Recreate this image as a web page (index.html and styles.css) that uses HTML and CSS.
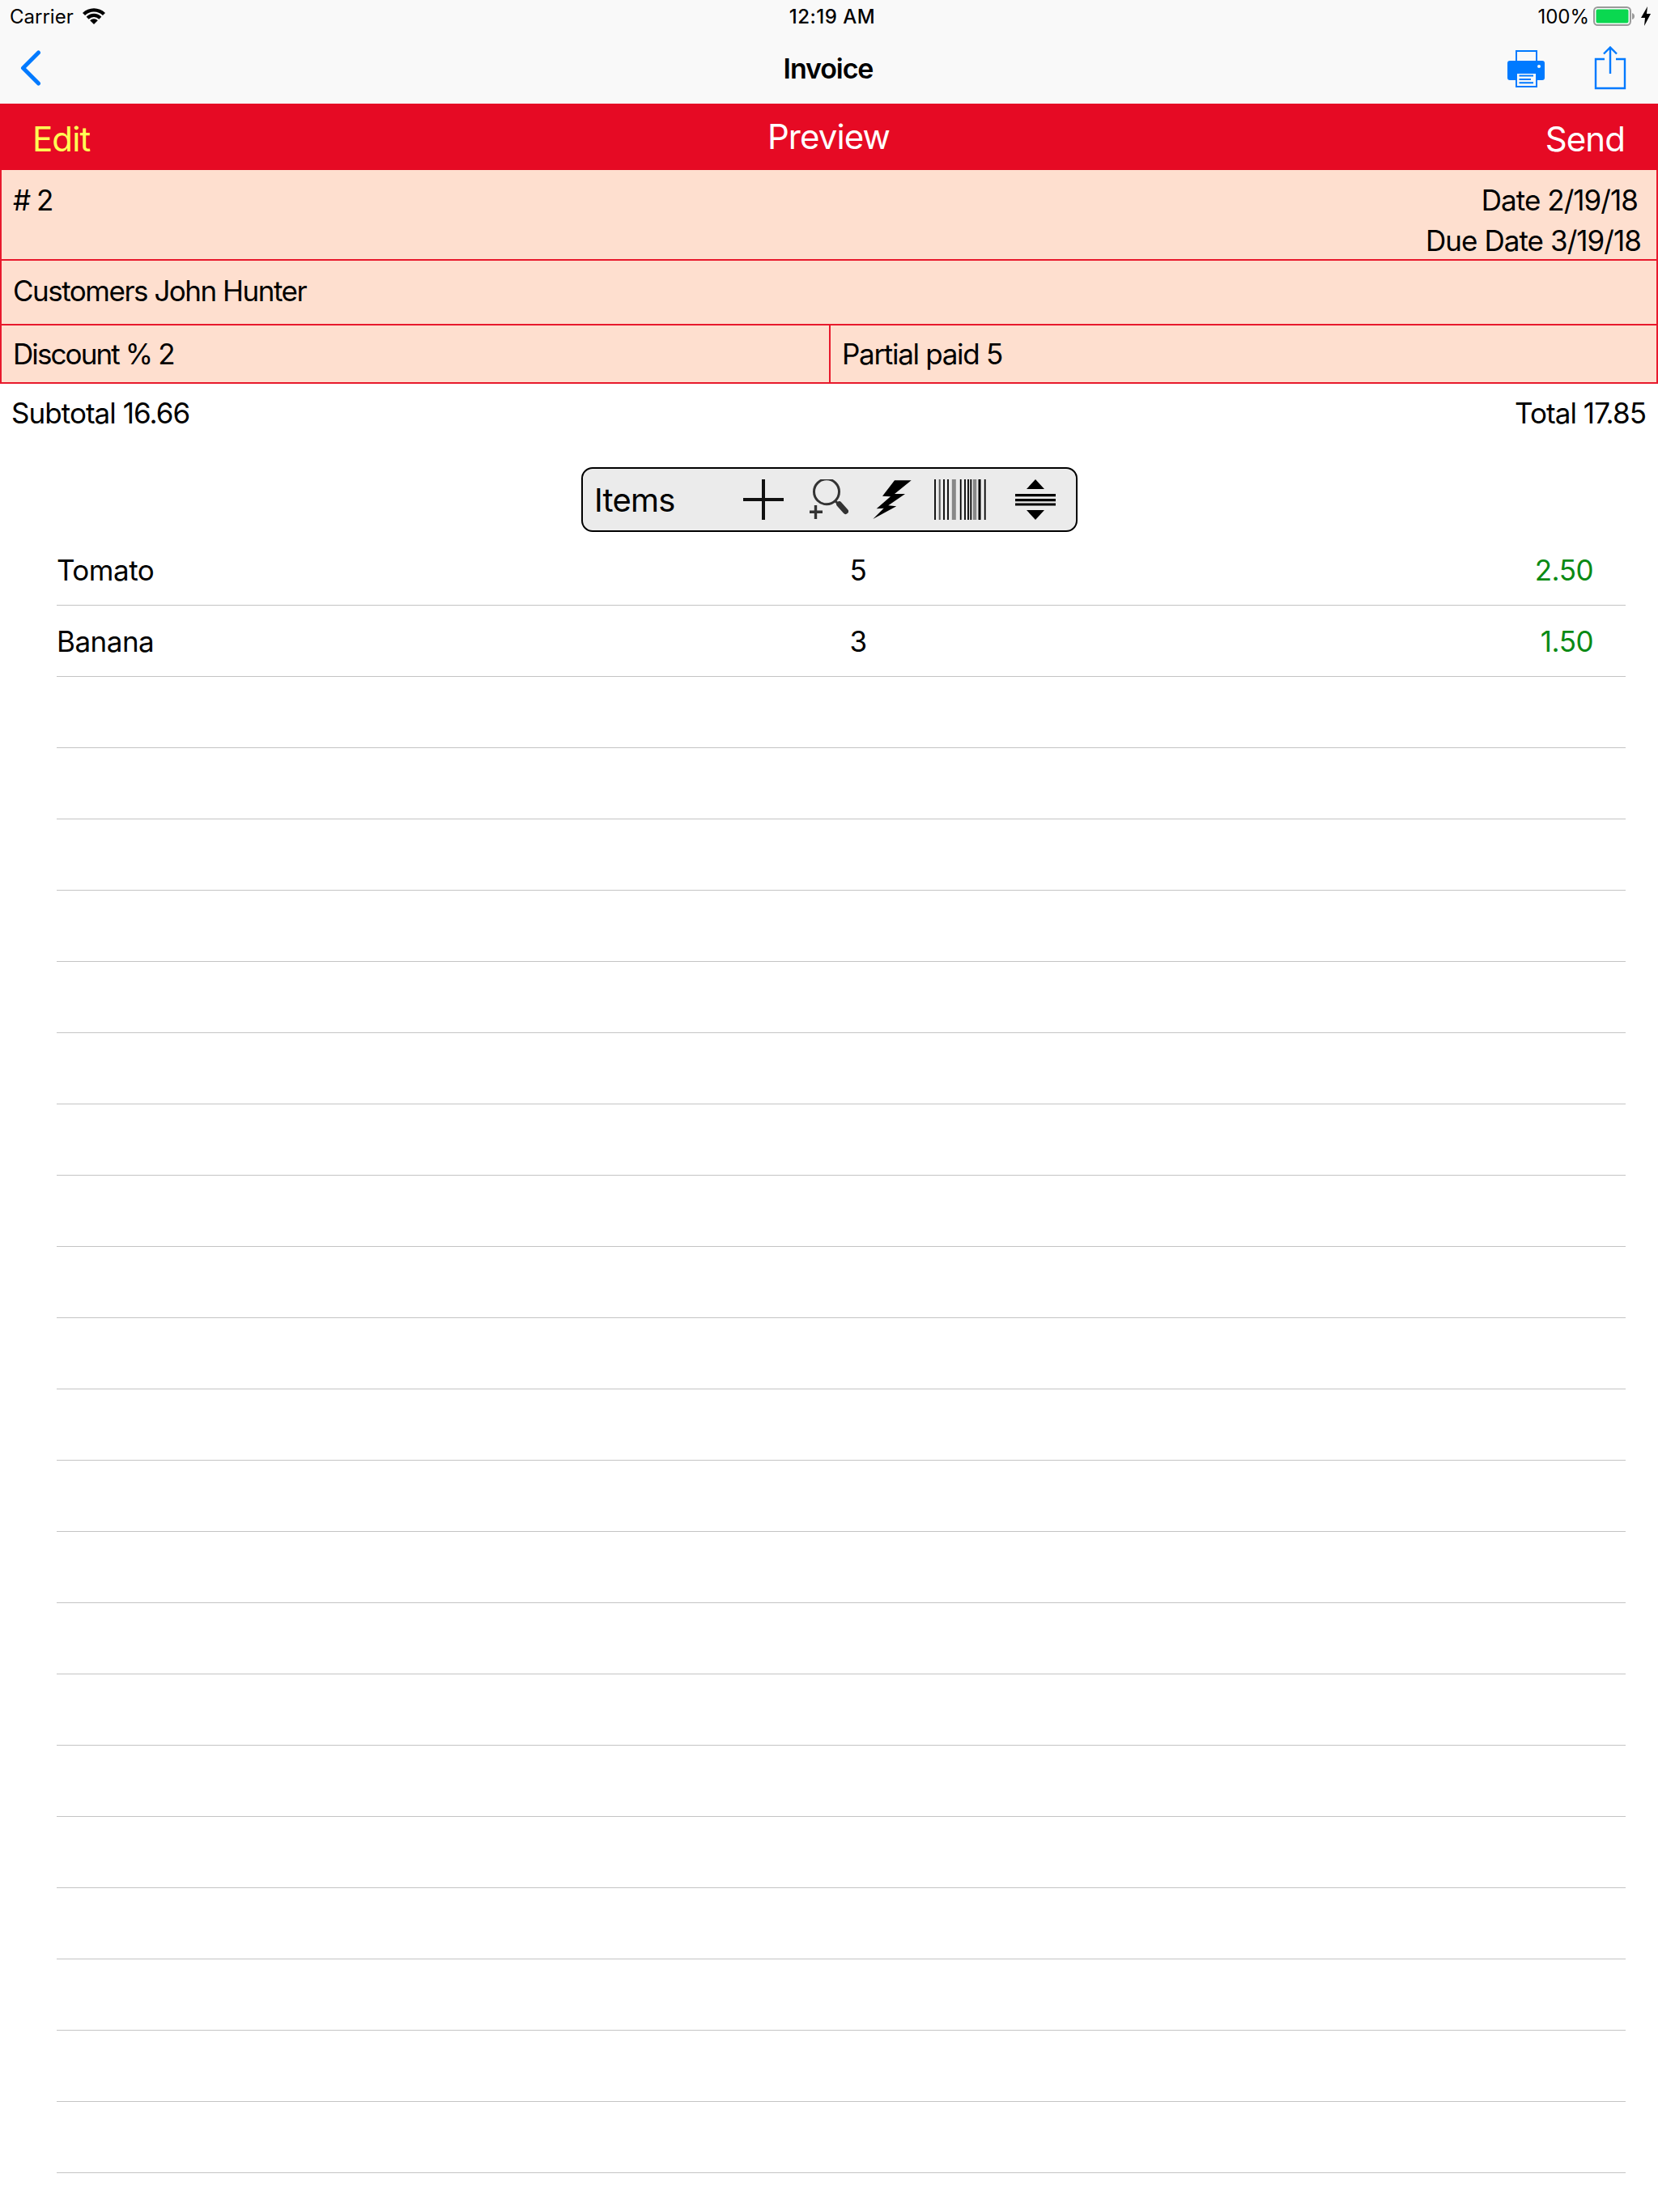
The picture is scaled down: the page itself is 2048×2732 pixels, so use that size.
FILE: index.html
```html
<!DOCTYPE html>
<html lang="en">
<head>
  <meta charset="UTF-8">
  <title>Invoice</title>
  <link rel="stylesheet" href="styles.css">
</head>
<body>
  <div class="status-bar">
    <div class="status-left">
      <span>Carrier</span>
      <svg class="wifi" width="28" height="20" viewBox="0 0 28 20">
        <path d="M14 20 L9.200 15.200 A6.800 6.800 0 0 1 18.800 15.200 Z" fill="#000"/>
        <path d="M7.640 13.640 A9 9 0 0 1 20.360 13.640 L23.330 10.670 A13.200 13.200 0 0 0 4.670 10.670 Z" fill="#000"/>
        <path d="M3.040 9.040 A15.500 15.500 0 0 1 24.960 9.040 L28 6 A19.800 19.800 0 0 0 0 6 Z" fill="#000"/>
      </svg>
    </div>
    <div class="status-time">12:19 AM</div>
    <div class="status-right">
      <span>100%</span>
      <svg class="battery" width="54" height="24" viewBox="0 0 54 24">
        <rect x="1" y="1" width="45" height="22" rx="4.500" fill="none" stroke="#9a9a9a" stroke-width="2"/>
        <rect x="3.500" y="3.500" width="40" height="17" rx="2" fill="#0ad850"/>
        <path d="M48 8 Q51 9 51 12 Q51 15 48 16 Z" fill="#9a9a9a"/>
      </svg>
      <svg class="bolt" width="12" height="24" viewBox="0 0 12 24">
        <path d="M8 0 L0 14 H5 L4 24 L12 9 H7 Z" fill="#000"/>
      </svg>
    </div>
  </div>

  <nav class="navbar">
    <div class="nav-left">
      <svg width="26" height="44" viewBox="0 0 26 44">
        <path d="M22.500 3 L3.500 22 L22.500 41" fill="none" stroke="#007aff" stroke-width="5" stroke-linecap="round" stroke-linejoin="round"/>
      </svg>
    </div>
    <div class="nav-title">Invoice</div>
    <div class="nav-right">
      <svg class="print-icon" width="48" height="48" viewBox="0 0 48 48">
        <rect x="12" y="3" width="25" height="13" fill="none" stroke="#007aff" stroke-width="2"/>
        <path d="M4 15 H44 Q47 15 47 18 V36 Q47 39 44 39 H4 Q1 39 1 36 V18 Q1 15 4 15 Z" fill="#007aff"/>
        <circle cx="40" cy="22" r="2" fill="#f9f9f9"/>
        <rect x="12" y="30" width="25" height="17" fill="#f9f9f9" stroke="#007aff" stroke-width="2"/>
        <path d="M15.500 33.500 H33 M15.500 38 H30 M15.500 42.300 H33" stroke="#007aff" stroke-width="2"/>
      </svg>
      <svg class="share-icon" width="40" height="54" viewBox="0 0 40 54">
        <path d="M13 16 H2 V52 H38 V16 H27" fill="none" stroke="#007aff" stroke-width="2.400"/>
        <path d="M20 2 V34 M12 9.500 L20 1.500 L28 9.500" fill="none" stroke="#007aff" stroke-width="2.400"/>
      </svg>
    </div>
  </nav>

  <div class="tab-bar">
    <div class="tab-edit">Edit</div>
    <div class="tab-preview">Preview</div>
    <div class="tab-send">Send</div>
  </div>

  <div class="info-box">
    <div class="info-row info-head">
      <div class="invoice-no">#&nbsp;2</div>
      <div class="dates">
        <div class="date">Date 2/19/18</div>
        <div class="due-date">Due Date 3/19/18</div>
      </div>
    </div>
    <div class="info-row info-customer">Customers John Hunter</div>
    <div class="info-row info-split">
      <div class="split-cell discount">Discount % 2</div>
      <div class="split-cell partial">Partial paid 5</div>
    </div>
  </div>

  <div class="totals">
    <div>Subtotal 16.66</div>
    <div>Total 17.85</div>
  </div>

  <div class="toolbar-wrap">
    <div class="toolbar">
      <span class="toolbar-label">Items</span>
      <svg class="tool-plus" width="50" height="50" viewBox="0 0 50 50">
        <path d="M25 0 V50 M0 25 H50" stroke="#111" stroke-width="4"/>
      </svg>
      <svg class="tool-search" width="50" height="50" viewBox="0 0 50 50">
        <circle cx="23" cy="15.300" r="15.500" fill="none" stroke="#333" stroke-width="3"/>
        <path d="M33 26 L39 32" stroke="#333" stroke-width="3"/>
        <path d="M38.700 30.700 L46.500 39.500" stroke="#333" stroke-width="7" stroke-linecap="round"/>
        <path d="M2 40.300 H18 M9.500 32 V49" stroke="#333" stroke-width="3.400"/>
      </svg>
      <svg class="tool-bolt" width="48" height="48" viewBox="0 0 48 48">
        <path d="M27 0.300 H47.700 L27 17 H40 L19.300 31.300 L29.300 32.300 L0.300 48 L13.700 34.700 L4.700 35.300 L22 20.300 L12 19.700 Z" fill="#000"/>
      </svg>
      <svg class="tool-barcode" width="65" height="50" viewBox="0 0 65 50">
        <path d="M1 0 V50 M12 0 V50 M17 0 V50 M32.700 0 V50 M38 0 V50 M42 0 V50 M45.300 0 V50 M62.700 0 V50" stroke="#000" stroke-width="1.800"/>
        <path d="M6.700 0 V50" stroke="#555" stroke-width="2"/>
        <path d="M24.300 0 V50" stroke="#888" stroke-width="5"/>
        <path d="M50 0 V50" stroke="#888" stroke-width="4.500"/>
        <path d="M56 0 V50" stroke="#000" stroke-width="3"/>
      </svg>
      <svg class="tool-sort" width="51" height="50" viewBox="0 0 51 50">
        <path d="M25 0 L36 12 H14 Z M14 38 H36 L25 50 Z" fill="#000"/>
        <path d="M0 19.700 H50 M0 25.700 H50 M0 31 H50" stroke="#000" stroke-width="3.200"/>
      </svg>
    </div>
  </div>

  <div class="items">
    <div class="item-row"><span>Tomato</span><span class="qty">5</span><span class="price">2.50</span></div>
    <div class="item-row"><span>Banana</span><span class="qty">3</span><span class="price">1.50</span></div>
    <div class="item-row"></div>
    <div class="item-row"></div>
    <div class="item-row"></div>
    <div class="item-row"></div>
    <div class="item-row"></div>
    <div class="item-row"></div>
    <div class="item-row"></div>
    <div class="item-row"></div>
    <div class="item-row"></div>
    <div class="item-row"></div>
    <div class="item-row"></div>
    <div class="item-row"></div>
    <div class="item-row"></div>
    <div class="item-row"></div>
    <div class="item-row"></div>
    <div class="item-row"></div>
    <div class="item-row"></div>
    <div class="item-row"></div>
    <div class="item-row"></div>
    <div class="item-row"></div>
    <div class="item-row"></div>
  </div>
</body>
</html>
```

FILE: styles.css
```css
:root {
  --blue: #007aff;
  --red: #e60a24;
  --peach: #fedfcf;
  --line: #e8192c;
}

html, body {
  margin: 0;
  padding: 0;
}

body {
  width: 2048px;
  height: 2732px;
  overflow: hidden;
  background-color: #fff;
  color: #000;
  font-family: 'Inter', sans-serif;
  font-size: 35px;
  letter-spacing: -0.5px;
}

.status-bar {
  height: 40px;
  display: grid;
  grid-template-columns: 1fr auto 1fr;
  align-items: center;
  padding: 0 9px 0 12px;
  background-color: #f9f9f9;
  font-size: 24px;
  letter-spacing: 0;
}

.status-left {
  display: flex;
  align-items: center;
  gap: 11px;
}

.status-time {
  font-weight: 500;
  letter-spacing: 0.5px;
  padding-left: 5px;
}

.status-right {
  display: flex;
  align-items: center;
  justify-content: flex-end;
  gap: 5px;
}

.navbar {
  height: 88px;
  display: grid;
  grid-template-columns: 1fr auto 1fr;
  align-items: center;
  background-color: #f9f9f9;
}

.nav-left {
  padding-left: 25px;
  display: flex;
}

.nav-title {
  font-size: 34px;
  font-weight: 600;
  letter-spacing: -1.1px;
  margin-left: -2px;
}

.nav-right {
  display: flex;
  align-items: center;
  justify-content: flex-end;
  gap: 60px;
  padding-right: 39px;
}

.tab-bar {
  height: 82px;
  display: grid;
  grid-template-columns: 1fr auto 1fr;
  align-items: center;
  padding: 0 41px 0 40px;
  background-color: var(--red);
  color: #fff;
  font-size: 42px;
  letter-spacing: -0.9px;
}

.tab-edit {
  color: #ffff55;
  margin-top: 4px;
}

.tab-preview {
  margin-top: -2px;
}

.tab-send {
  text-align: right;
  margin-top: 4px;
}

.info-box {
  background-color: var(--peach);
  border-left: 2px solid var(--line);
  border-right: 2px solid var(--line);
  letter-spacing: -0.95px;
}

.info-row {
  box-sizing: border-box;
  border-bottom: 2px solid var(--line);
  padding: 0 14px;
}

.info-head {
  height: 112px;
  display: flex;
  justify-content: space-between;
  padding-top: 16px;
  padding-right: 19px;
}

.invoice-no {
  letter-spacing: -1.5px;
}

.dates {
  display: flex;
  flex-direction: column;
  align-items: flex-end;
}

.date {
  padding-right: 4px;
  height: 50px;
}

.info-customer {
  height: 80px;
  display: flex;
  align-items: center;
  padding-bottom: 4px;
  letter-spacing: -1.5px;
}

.info-split {
  height: 72px;
  display: grid;
  grid-template-columns: 1fr 1fr;
  padding: 0;
}

.split-cell {
  display: flex;
  align-items: center;
  padding-left: 14px;
}

.split-cell + .split-cell {
  border-left: 2px solid var(--line);
}

.discount {
  letter-spacing: -1.9px;
}

.partial {
  letter-spacing: -1.3px;
}

.totals {
  display: flex;
  justify-content: space-between;
  align-items: center;
  height: 72px;
  padding: 0 15px 0 14px;
  letter-spacing: -0.95px;
}

.toolbar-wrap {
  display: flex;
  justify-content: center;
  padding-left: 1px;
  padding-top: 31px;
}

.toolbar {
  box-sizing: border-box;
  width: 613px;
  height: 80px;
  display: flex;
  align-items: center;
  padding-left: 14px;
  border: 2px solid #000;
  border-radius: 14px;
  background-color: #ebebeb;
}

.toolbar-label {
  width: 183px;
  font-size: 40px;
  letter-spacing: -0.8px;
}

.tool-plus { margin-left: 1px; }
.tool-search { margin-left: 30px; }
.tool-bolt { margin-left: 30px; }
.tool-barcode { margin-left: 28px; }
.tool-sort { margin-left: 35px; }

.items {
  margin: 3px 40px 0 70px;
}

.item-row {
  box-sizing: border-box;
  height: 88px;
  display: grid;
  grid-template-columns: 900px 180px 1fr;
  align-items: center;
  border-bottom: 1px solid #c4c4c4;
}

.qty {
  text-align: center;
}

.price {
  text-align: right;
  padding-right: 40px;
  color: #0a8a14;
}
```
